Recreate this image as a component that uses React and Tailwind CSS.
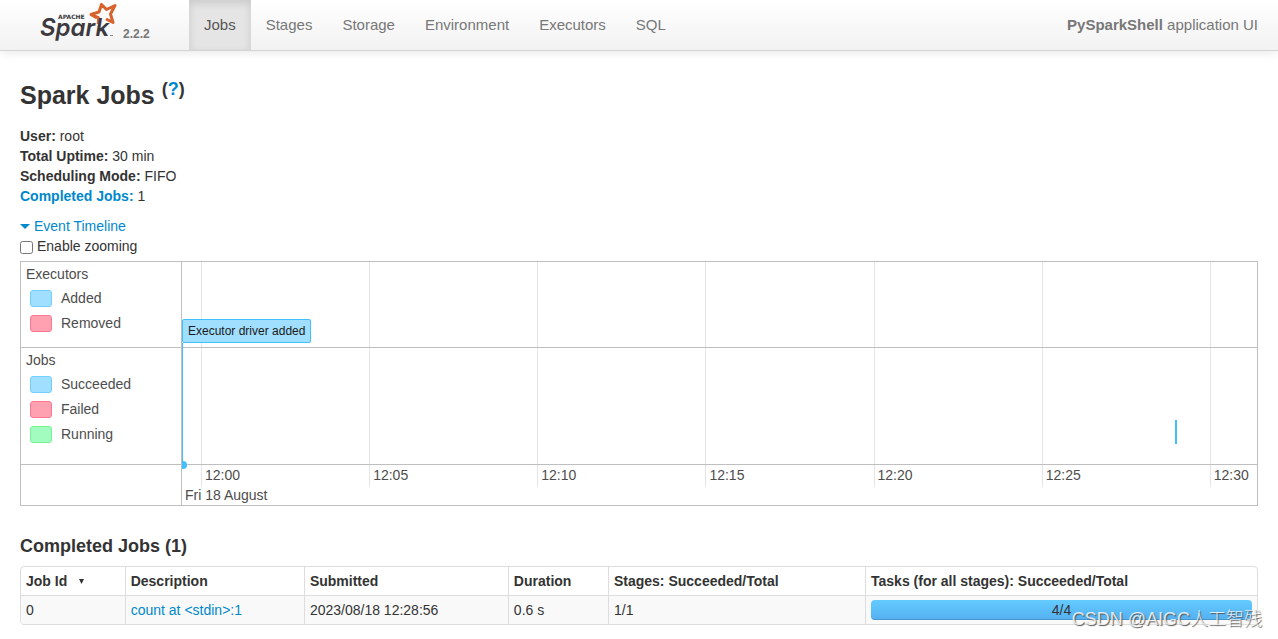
const TABS = ['Jobs', 'Stages', 'Storage', 'Environment', 'Executors', 'SQL']

const TICKS = ['12:00', '12:05', '12:10', '12:15', '12:20', '12:25', '12:30']

const SWATCHES = {
  blue: 'border-[#70cfff] bg-[#a0dfff]',
  red: 'border-[#ff7890] bg-[#ffa1b0]',
  green: 'border-[#75f595] bg-[#a2fcc0]',
}

function SparkLogo() {
  return (
    <svg viewBox="0 0 80 44" className="h-11 w-20" role="img" aria-label="Apache Spark">
      <path
        d="M57 18 L51 14.5 L59 12 L61.5 4.5 L66.5 9.5 L75 5.5 L70.5 14 L73 22.5 L66 19"
        fill="none"
        stroke="#d8622b"
        strokeWidth="3"
        strokeLinejoin="round"
      />
      <path d="M51 14.5 L58.5 17.5 L58 24" fill="none" stroke="#d8622b" strokeWidth="2.5" strokeLinejoin="round" />
      <text x="0" y="36" fontSize="24" fontWeight="600" fontStyle="italic" fontFamily="Inter, sans-serif" fill="#3c3a3e">
        Spark
      </text>
      <text x="18" y="19" fontSize="6" fontWeight="700" fontFamily="'DejaVu Sans', sans-serif" fill="#3c3a3e">
        APACHE
      </text>
      <path d="M70 35.5h3" stroke="#8a898b" strokeWidth="1" />
    </svg>
  )
}

function Navbar() {
  return (
    <header className="flex h-[51px] items-stretch border-b border-[#d4d4d4] bg-gradient-to-b from-white to-[#f2f2f2] pr-5 pl-10 text-[15px] leading-5 text-[#777] shadow-[0_1px_10px_rgba(0,0,0,0.1)]">
      <a href="#" className="flex w-[149px] items-start">
        <SparkLogo />
        <span className="mt-6 ml-[3px] text-xs leading-5 font-bold">2.2.2</span>
      </a>
      <nav className="flex">
        {TABS.map((tab, i) => (
          <a
            key={tab}
            href="#"
            className={
              i === 0
                ? 'bg-[#e5e5e5] px-[15px] py-[15px] text-[#555] shadow-[inset_0_3px_8px_rgba(0,0,0,0.125)]'
                : 'px-[15px] py-[15px]'
            }
          >
            {tab}
          </a>
        ))}
      </nav>
      <p className="ml-auto py-[15px]">
        <strong>PySparkShell</strong> application UI
      </p>
    </header>
  )
}

function Legend({ title, items, className }) {
  return (
    <div className={className}>
      <div className="px-[5px] pt-0.5 leading-5">{title}</div>
      <ul className="mt-0.5 pl-[9px]">
        {items.map(([label, color]) => (
          <li key={label} className="flex h-[25px] items-center">
            <span className={`h-[17px] w-[22px] rounded-[3px] border ${SWATCHES[color]}`} />
            <span className="ml-[9px] pb-0.5">{label}</span>
          </li>
        ))}
      </ul>
    </div>
  )
}

function Timeline() {
  return (
    <section className="mt-[5px] grid grid-cols-[161px_1fr] border border-[#bfbfbf] text-[#4d4d4d]">
      <div className="border-r border-[#bfbfbf]">
        <Legend
          title="Executors"
          items={[['Added', 'blue'], ['Removed', 'red']]}
          className="h-[86px] border-b border-[#bfbfbf]"
        />
        <Legend
          title="Jobs"
          items={[['Succeeded', 'blue'], ['Failed', 'red'], ['Running', 'green']]}
          className="h-[117px] border-b border-[#bfbfbf]"
        />
      </div>
      <div className="relative h-[243px] overflow-hidden">
        {TICKS.map((t, i) => (
          <div
            key={t}
            className="absolute top-0 h-[225px] border-l border-[#e5e5e5] pt-[203px] pl-[3px] leading-5"
            style={{ left: `${1.77 + i * 15.64}%` }}
          >
            {t}
          </div>
        ))}
        <div className="absolute inset-x-0 top-[85px] border-t border-[#bfbfbf]" />
        <div className="absolute inset-x-0 top-[202px] border-t border-[#bfbfbf]" />
        <div className="absolute top-[223px] left-[3px] leading-5">Fri 18 August</div>
        {/* executor event: label, stem and dot on the axis */}
        <div className="absolute top-[81px] left-0 h-[122px] w-px bg-[#41c0ff]" />
        <div className="absolute top-[199px] -left-[3px] size-2 rounded-full bg-[#41c0ff]" />
        <div className="absolute top-[57px] left-0 rounded-[2px] border border-[#3ec0ff] bg-[#a0dfff] px-[5px] py-[3px] text-xs leading-4 whitespace-nowrap text-[#1a1a1a]">
          Executor driver added
        </div>
        <div className="absolute top-[158px] left-[92.4%] h-6 w-0.5 bg-[#3ec0ff]" />
      </div>
    </section>
  )
}

function JobsTable() {
  const cell = 'border-l border-[#ddd] px-[5px] py-1 first:border-l-0'
  return (
    <div className="mt-2.5 overflow-hidden rounded border border-[#ddd]">
      <table className="w-full table-fixed text-left leading-5">
        <colgroup>
          <col className="w-[8.43%]" />
          <col className="w-[14.5%]" />
          <col className="w-[16.5%]" />
          <col className="w-[8.1%]" />
          <col className="w-[20.8%]" />
          <col />
        </colgroup>
        <thead>
          <tr>
            <th className={cell}>
              <div className="flex items-center gap-3">
                Job Id
                <svg viewBox="0 0 5 5" className="size-[5px]" fill="currentColor"><path d="M0 0h5L2.5 5z" /></svg>
              </div>
            </th>
            <th className={cell}>Description</th>
            <th className={cell}>Submitted</th>
            <th className={cell}>Duration</th>
            <th className={cell}>Stages: Succeeded/Total</th>
            <th className={cell}>Tasks (for all stages): Succeeded/Total</th>
          </tr>
        </thead>
        <tbody>
          <tr className="border-t border-[#ddd] bg-[#f9f9f9]">
            <td className={cell}>0</td>
            <td className={cell}><a href="#" className="text-[#08c]">count at &lt;stdin&gt;:1</a></td>
            <td className={cell}>2023/08/18 12:28:56</td>
            <td className={cell}>0.6 s</td>
            <td className={cell}>1/1</td>
            <td className={cell}>
              <div className="h-5 rounded bg-gradient-to-b from-[#64cbff] to-[#54b0f0] text-center shadow-[inset_0_-1px_0_rgba(0,0,0,0.15)]">
                4/4
              </div>
            </td>
          </tr>
        </tbody>
      </table>
    </div>
  )
}

export default function App() {
  return (
    <div className="relative min-h-screen bg-white font-['Liberation_Sans',Arial,sans-serif] text-sm leading-5 text-[#333]">
      <Navbar />
      <main className="px-5 pt-[19px]">
        <h1 className="text-[25px] leading-[50px] font-bold">
          Spark Jobs{' '}
          <sup className="text-lg leading-none">
            (<a href="#" className="text-[#08c]">?</a>)
          </sup>
        </h1>
        <ul className="mt-1.5">
          <li><strong>User:</strong> root</li>
          <li><strong>Total Uptime:</strong> 30 min</li>
          <li><strong>Scheduling Mode:</strong> FIFO</li>
          <li><a href="#completed" className="font-bold text-[#08c]">Completed Jobs:</a> 1</li>
        </ul>
        <button type="button" className="mt-2.5 flex items-center gap-1 text-[#08c]">
          <svg viewBox="0 0 10 5" className="h-[5px] w-2.5" fill="currentColor"><path d="M0 0h10L5 5z" /></svg>
          Event Timeline
        </button>
        <label className="flex items-center gap-1">
          <input type="checkbox" className="mt-0.5 size-[13px]" />
          Enable zooming
        </label>
        <Timeline />
        <h2 id="completed" className="mt-[30px] text-lg leading-5 font-bold">Completed Jobs (1)</h2>
        <JobsTable />
      </main>
      <div className="pointer-events-none absolute right-4 bottom-1.5 font-['Liberation_Sans','Noto_Sans_CJK_SC',sans-serif] text-lg font-light text-white/80 [text-shadow:1px_1px_1px_#555]">
        CSDN @AIGC人工智残
      </div>
    </div>
  )
}
